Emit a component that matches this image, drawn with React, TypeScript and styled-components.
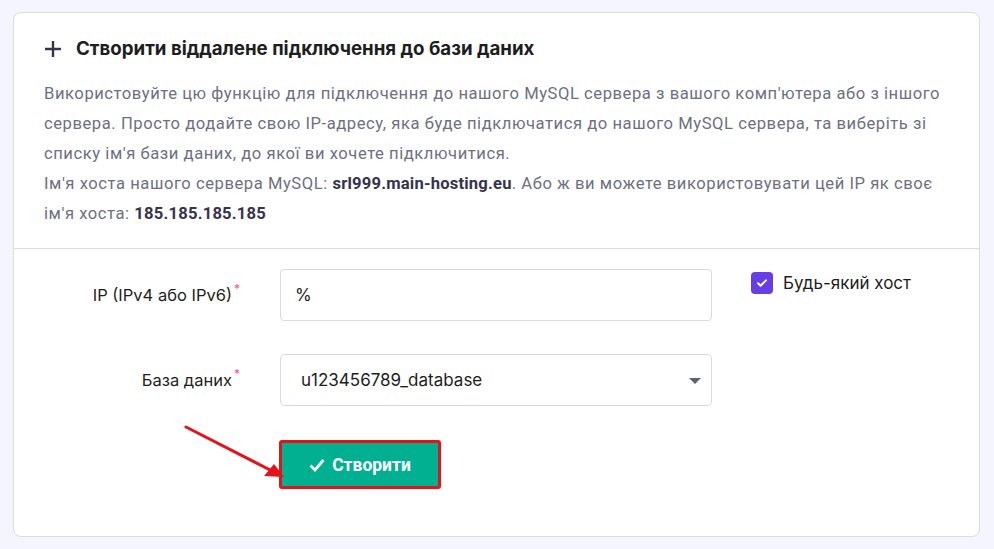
import React from "react";
import styled, { createGlobalStyle } from "styled-components";

const GlobalStyle = createGlobalStyle`
  * {
    box-sizing: border-box;
    margin: 0;
    padding: 0;
  }
  body {
    background: #f4f5ff;
    font-family: Inter, "Noto Sans", sans-serif;
    color: #1d1e20;
  }
`;

const Page = styled.div`
  padding: 12px 14px 12px 13px;
  height: 549px;
`;

const Card = styled.section`
  position: relative;
  background: #fff;
  border: 1px solid #dadce0;
  border-radius: 8px;
  height: 525px;
`;

const Top = styled.div`
  padding: 24px 20px 19px 30px;
  border-bottom: 1px solid #dadce0;
`;

const Heading = styled.h2`
  display: flex;
  align-items: center;
  gap: 14px;
  font-size: 18.7px;
  font-weight: 700;
  line-height: 24px;
  color: #1d1e20;
  margin-bottom: 18px;
`;

const Text = styled.p`
  font-family: Roboto, sans-serif;
  font-size: 16.6px;
  letter-spacing: 0.55px;
  line-height: 30px;
  color: #6d7081;
  b {
    font-weight: 700;
    color: #36344d;
    letter-spacing: 0.2px;
  }
`;

const Form = styled.div`
  display: grid;
  grid-template-columns: 226px 432px auto;
  column-gap: 40px;
  row-gap: 33px;
  padding: 20px 0 0 0;
  align-items: start;
`;

const Label = styled.label`
  height: 52px;
  text-align: right;
  font-size: 16.5px;
  line-height: 52px;
  color: #1d1e20;
  sup {
    color: #fc5185;
    font-size: 12px;
    line-height: 0;
    margin-left: 2px;
    position: relative;
    top: -2px;
  }
`;

const Field = styled.div<{ $pad: number }>`
  position: relative;
  height: 52px;
  border: 1px solid #dadce0;
  border-radius: 4px;
  display: flex;
  align-items: center;
  padding-left: ${(p) => p.$pad}px;
  font-size: 17px;
  color: #1d1e20;
`;

const Caret = styled.span`
  position: absolute;
  right: 10px;
  top: 23px;
  width: 0;
  height: 0;
  border-left: 6px solid transparent;
  border-right: 6px solid transparent;
  border-top: 6px solid #5f6275;
`;

const Check = styled.div`
  display: flex;
  align-items: center;
  gap: 10px;
  padding-top: 3px;
  margin-left: -1px;
  font-size: 17px;
  color: #1d1e20;
`;

const Box = styled.span`
  width: 22px;
  height: 22px;
  border-radius: 4px;
  background: #673de6;
  display: flex;
  align-items: center;
  justify-content: center;
`;

const ButtonRow = styled.div`
  grid-column: 2;
  margin-top: 1px;
`;

const Button = styled.button`
  display: inline-flex;
  align-items: center;
  gap: 7px;
  height: 49px;
  width: 162px;
  justify-content: center;
  background: #00b090;
  color: #fff;
  font-family: Roboto, sans-serif;
  font-size: 17.5px;
  font-weight: 700;
  border: 3px solid #e3131b;
  border-radius: 3px;
  margin-left: -1px;
`;

const Arrow = styled.svg`
  position: absolute;
  left: 170px;
  top: 410px;
`;

export default function App() {
  return (
    <>
      <GlobalStyle />
      <Page>
        <Card>
          <Top>
            <Heading>
              <svg width="18" height="18" viewBox="0 0 18 18">
                <path d="M9 1v16M1 9h16" stroke="#36344d" strokeWidth="2.4" />
              </svg>
              Створити віддалене підключення до бази даних
            </Heading>
            <Text>
              Використовуйте цю функцію для підключення до нашого MySQL сервера з вашого комп'ютера або з іншого
              сервера. Просто додайте свою IP-адресу, яка буде підключатися до нашого MySQL сервера, та виберіть зі
              списку ім'я бази даних, до якої ви хочете підключитися.
              <br />
              Ім'я хоста нашого сервера MySQL: <b>srl999.main-hosting.eu</b>. Або ж ви можете використовувати цей IP як своє
              ім'я хоста: <b>185.185.185.185</b>
            </Text>
          </Top>
          <Form>
            <Label>
              IP (IPv4 або IPv6)<sup>*</sup>
            </Label>
            <Field $pad={14}>%</Field>
            <Check>
              <Box>
                <svg width="14" height="14" viewBox="0 0 14 14">
                  <path d="M3 7.2l2.6 2.6L11 4.4" fill="none" stroke="#fff" strokeWidth="2" strokeLinecap="round" strokeLinejoin="round" />
                </svg>
              </Box>
              Будь-який хост
            </Check>
            <Label>
              База даних<sup>*</sup>
            </Label>
            <Field $pad={20}>
              u123456789_database
              <Caret />
            </Field>
            <div />
            <ButtonRow>
              <Button>
                <svg width="16" height="14" viewBox="0 0 16 14">
                  <path d="M1.5 7.5l4.5 4.5L14.5 2" fill="none" stroke="#fff" strokeWidth="2.8" />
                </svg>
                Створити
              </Button>
            </ButtonRow>
          </Form>
          <Arrow width="110" height="70" viewBox="0 0 110 70">
            <path d="M2 4L92 50" stroke="#e3131b" strokeWidth="3" strokeLinecap="round" />
            <path d="M100 54L80 53L90 41Z" fill="#e3131b" />
          </Arrow>
        </Card>
      </Page>
    </>
  );
}
